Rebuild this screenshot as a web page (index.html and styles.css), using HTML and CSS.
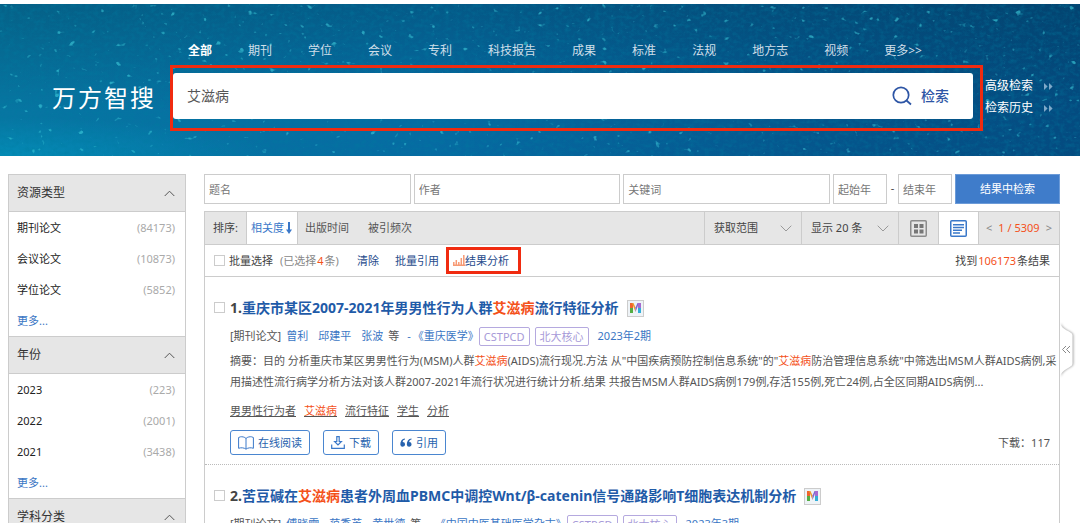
FILE: index.html
```html
<!DOCTYPE html>
<html lang="zh-CN">
<head>
<meta charset="utf-8">
<title>万方智搜</title>
<link rel="stylesheet" href="styles.css">
</head>
<body>
<header class="hero">
  <svg class="hero-texture" aria-hidden="true">
    <filter id="specks" x="0" y="0" width="100%" height="100%">
      <feTurbulence type="fractalNoise" baseFrequency="0.13 0.16" numOctaves="2" seed="8"/>
      <feColorMatrix values="0 0 0 0 0.05  0 0 0 0 0.62  0 0 0 0 0.72  8 0 0 0 -5.7"/>
    </filter>
    <filter id="grain" x="0" y="0" width="100%" height="100%">
      <feTurbulence type="fractalNoise" baseFrequency="0.2 0.25" numOctaves="3" seed="3"/>
      <feColorMatrix values="0 0 0 0 0  0 0 0 0 0.2  0 0 0 0 0.35  0 2 0 0 -0.8"/>
    </filter>
    <rect width="100%" height="100%" filter="url(#grain)" opacity="0.4"/>
    <rect width="100%" height="100%" filter="url(#specks)" opacity="0.6"/>
  </svg>
  <div class="brand"><span>万</span><span>方</span><span>智</span><span>搜</span></div>
  <div class="search">
    <nav class="tabs">
      <a class="on" href="#">全部</a><a href="#">期刊</a><a href="#">学位</a><a href="#">会议</a><a href="#">专利</a><a href="#">科技报告</a><a href="#">成果</a><a href="#">标准</a><a href="#">法规</a><a href="#">地方志</a><a href="#">视频</a><a href="#">更多&gt;&gt;</a>
    </nav>
    <div class="search-mark">
      <form class="search-box">
        <input type="text" value="艾滋病" aria-label="检索词">
        <button type="button">
          <svg width="20" height="20" viewBox="0 0 20 20" fill="none" stroke="#2d55a5" stroke-width="1.7"><circle cx="9" cy="9" r="7.7"/><path d="M14.5 14.5 19 18.5"/></svg>检索
        </button>
      </form>
    </div>
  </div>
  <nav class="side-links">
    <a href="#">高级检索<svg width="10" height="7" viewBox="0 0 10 7" fill="#7fa9c9"><path d="M1 0 4.600 3.500 1 7zM6 0 9.600 3.500 6 7z"/></svg></a>
    <a href="#">检索历史<svg width="10" height="7" viewBox="0 0 10 7" fill="#7fa9c9"><path d="M1 0 4.600 3.500 1 7zM6 0 9.600 3.500 6 7z"/></svg></a>
  </nav>
</header>

<div class="page">
  <aside class="facets">
    <section>
      <h2>资源类型<svg width="11" height="7" viewBox="0 0 11 7"><path d="M.7 6 5.500 1.200 10.300 6"/></svg></h2>
      <ul>
        <li><a href="#">期刊论文</a><span>(84173)</span></li>
        <li><a href="#">会议论文</a><span>(10873)</span></li>
        <li><a href="#">学位论文</a><span>(5852)</span></li>
        <li><a class="more" href="#">更多...</a></li>
      </ul>
    </section>
    <section>
      <h2>年份<svg width="11" height="7" viewBox="0 0 11 7"><path d="M.7 6 5.500 1.200 10.300 6"/></svg></h2>
      <ul>
        <li><a href="#">2023</a><span>(223)</span></li>
        <li><a href="#">2022</a><span>(2001)</span></li>
        <li><a href="#">2021</a><span>(3438)</span></li>
        <li><a class="more" href="#">更多...</a></li>
      </ul>
    </section>
    <section>
      <h2>学科分类<svg width="11" height="7" viewBox="0 0 11 7"><path d="M.7 6 5.500 1.200 10.300 6"/></svg></h2>
    </section>
  </aside>

  <main class="main">
    <form class="refine">
      <input type="text" placeholder="题名" aria-label="题名">
      <input type="text" placeholder="作者" aria-label="作者">
      <input type="text" placeholder="关键词" aria-label="关键词">
      <div class="years"><input type="text" placeholder="起始年" aria-label="起始年"><span>-</span><input type="text" placeholder="结束年" aria-label="结束年"></div>
      <button type="button">结果中检索</button>
    </form>

    <div class="panel">
      <div class="toolbar">
        <span class="sort-label">排序:</span>
        <button class="sort on" type="button">相关度<svg width="6" height="12" viewBox="0 0 6 12"><path d="M3 0v10" stroke="#3a78c9" stroke-width="2"/><path d="M0 7.500h6L3 12z" fill="#3a78c9"/></svg></button>
        <button class="sort" type="button">出版时间</button>
        <button class="sort late" type="button">被引频次</button>
        <div class="tools">
          <div class="drop"><select aria-label="获取范围"><option>获取范围</option></select><svg width="12" height="7" viewBox="0 0 12 7"><path d="M.7.7 6 6 11.300.7"/></svg></div>
          <div class="drop"><select aria-label="显示条数"><option>显示 20 条</option></select><svg width="12" height="7" viewBox="0 0 12 7"><path d="M.7.7 6 6 11.300.7"/></svg></div>
          <button class="view" type="button" aria-label="网格"><svg width="17" height="17" viewBox="0 0 17 17"><rect x=".75" y=".75" width="15.500" height="15.500" rx="1" fill="none" stroke="#8c8c8c" stroke-width="1.500"/><path fill="#777" d="M4 4h4v4H4zM9.500 4h4v4h-4zM4 9.500h4v4H4zM9.500 9.500h4v4h-4z"/></svg></button>
          <button class="view on" type="button" aria-label="列表"><svg width="17" height="17" viewBox="0 0 17 17" fill="none" stroke="#3a78c9" stroke-width="1.500"><rect x=".75" y=".75" width="15.500" height="15.500" rx="1"/><path d="M3 4.800h11M3 7.500h11M3 10.200h9M3 12.900h7"/></svg></button>
          <div class="pager"><button type="button">&lt;</button><b>1 / 5309</b><button type="button">&gt;</button></div>
        </div>
      </div>
      <div class="batch">
        <label class="pick"><input type="checkbox">批量选择</label>
        <span class="picked">(已选择<em>4</em>条)</span>
        <a href="#">清除</a>
        <a class="cite-all" href="#">批量引用</a>
        <a class="analyse" href="#"><svg width="12" height="11" viewBox="0 0 12 11" stroke="#f79a74" stroke-width="1.500"><path d="M.8 10V7M3.300 10V5M5.800 10V7M8.300 10V3M10.800 10V0M0 10.300h12"/></svg>结果分析</a>
        <span class="found">找到<em>106173</em>条结果</span>
      </div>

      <article class="item">
        <input type="checkbox" aria-label="选择第1条">
        <div class="body">
          <h3>1.<a href="#">重庆市某区2007-2021年男男性行为人群<em>艾滋病</em>流行特征分析</a><span class="m"><svg width="11" height="10" viewBox="0 0 11 10"><path d="M0 0h3v10H0z" fill="#f0642d"/><path d="M0 5h3v5H0z" fill="#54ae43"/><path d="M2 0h1.500L5.500 4.500V9z" fill="#ed9b2d"/><path d="M5.500 9V4.500L7.500 0H9z" fill="#7e69cf"/><path d="M8 0h3v10H8z" fill="#a66bd0"/><path d="M8 5h3v5H8z" fill="#32aed8"/></svg></span></h3>
          <div class="meta">
            <span class="kind">[期刊论文]</span><span class="authors"><a href="#">曾利</a><a href="#">邱建平</a><a href="#">张波</a></span><span class="etc">等</span><span class="dash">-</span><a class="journal" href="#">《重庆医学》</a><span class="tag">CSTPCD</span><span class="tag">北大核心</span><a class="issue" href="#">2023年2期</a>
          </div>
          <p class="abstract">摘要：目的 分析重庆市某区男男性行为(MSM)人群<em>艾滋病</em>(AIDS)流行现况.方法 从"中国疾病预防控制信息系统"的"<em>艾滋病</em>防治管理信息系统"中筛选出MSM人群AIDS病例,采用描述性流行病学分析方法对该人群2007-2021年流行状况进行统计分析.结果 共报告MSM人群AIDS病例179例,存活155例,死亡24例,占全区同期AIDS病例...</p>
          <div class="words"><a href="#">男男性行为者</a><a href="#"><em>艾滋病</em></a><a href="#">流行特征</a><a href="#">学生</a><a href="#">分析</a></div>
          <div class="actions">
            <button type="button"><svg width="16" height="14" viewBox="0 0 16 14" fill="none" stroke="#3a78c9"><path d="M8 2.500C6.500.800 4 .600 2.500.8L.6 1.500v10.800c2.500-.9 5.400-.7 7.400.9 2-1.600 4.900-1.800 7.400-.9V1.500L13.500.8C12 .6 9.500.8 8 2.500zM8 2.500V13"/></svg>在线阅读</button>
            <button type="button"><svg width="14" height="13" viewBox="0 0 14 13" fill="none" stroke="#3a78c9" stroke-width="1.200"><path d="M5.800.6h2.400v4.900h2.200L7 9 3.600 5.500h2.200zM.7 8.500v3.800h12.600V8.500"/></svg>下载</button>
            <button type="button"><svg width="12" height="10" viewBox="0 0 12 10" fill="#2763ae"><path d="M5 .5C2 .8.300 3 .300 6.500a2.400 2.400 0 1 0 2.400-2.600C2.700 2.500 3.800 1.500 5 1.400zM11.500.5C8.500.8 6.800 3 6.800 6.500a2.400 2.400 0 1 0 2.400-2.600c0-1.400 1.100-2.400 2.300-2.500z"/></svg>引用</button>
            <span class="count">下载：117</span>
          </div>
        </div>
      </article>

      <article class="item">
        <input type="checkbox" aria-label="选择第2条">
        <div class="body">
          <h3>2.<a href="#">苦豆碱在<em>艾滋病</em>患者外周血PBMC中调控Wnt/β-catenin信号通路影响T细胞表达机制分析</a><span class="m"><svg width="11" height="10" viewBox="0 0 11 10"><path d="M0 0h3v10H0z" fill="#f0642d"/><path d="M0 5h3v5H0z" fill="#54ae43"/><path d="M2 0h1.500L5.500 4.500V9z" fill="#ed9b2d"/><path d="M5.500 9V4.500L7.500 0H9z" fill="#7e69cf"/><path d="M8 0h3v10H8z" fill="#a66bd0"/><path d="M8 5h3v5H8z" fill="#32aed8"/></svg></span></h3>
          <div class="meta">
            <span class="kind">[期刊论文]</span><span class="authors"><a href="#">傅晓雯</a><a href="#">范秀英</a><a href="#">黄世德</a></span><span class="etc">等</span><span class="dash">-</span><a class="journal" href="#">《中国中医基础医学杂志》</a><span class="tag">CSTPCD</span><span class="tag">北大核心</span><a class="issue" href="#">2023年3期</a>
          </div>
        </div>
      </article>
    </div>
  </main>
</div>

<button class="drawer" type="button" aria-label="展开侧栏"><svg width="20" height="60" viewBox="0 0 20 60"><path class="tab" d="M0 3C1 10 12 11 12.500 15v29C12 48 1 49 0 57z"/><path class="arrows" d="M6 26 2.500 29.500 6 33M10 26 6.500 29.500 10 33"/></svg></button>
</body>
</html>
```
FILE: styles.css
```css
* { box-sizing: border-box; }

html, body { height: 100%; }

body {
  margin: 0;
  padding-top: 4px;
  overflow: hidden;
  position: relative;
  background: #fff;
  color: #444;
  font: 11px/20px "Noto Sans", "Noto Sans CJK SC", sans-serif;
}

input, button, select { font: inherit; color: inherit; }
button { border: 0; padding: 0; background: none; cursor: pointer; }
a { color: #3a76c4; text-decoration: none; }
em { color: #f4511a; font-style: normal; }
svg { flex: none; }

/* Banner */
.hero {
  position: relative;
  display: flex;
  height: 152px;
  background:
    radial-gradient(ellipse at 0 100%, rgba(0, 160, 200, .5), transparent 18%),
    linear-gradient(to bottom, rgba(0, 50, 75, .3), transparent 70%),
    linear-gradient(90deg, #0776a2, #066ba2 40%, #05568d 75%, #044b80);
  color: #fff;
}

.hero-texture { position: absolute; inset: 0; width: 100%; height: 100%; }
.hero > :not(.hero-texture) { position: relative; }

.brand {
  display: flex;
  gap: 2px;
  width: 170px;
  padding: 77px 0 0 52px;
  font-size: 24px;
  line-height: 34px;
}

.search { flex: 1; padding-top: 37px; }

.tabs {
  display: flex;
  gap: 36px;
  padding-left: 18px;
  font-size: 12px;
  line-height: 20px;
  white-space: nowrap;
}

.tabs a { color: #cfdfe9; }
.tabs .on { color: #fff; font-weight: 700; }

.search-mark {
  margin-top: 4px;
  padding: 5px 7px 9px 0;
  border: 3px solid #f02b10;
}

.search-box {
  display: flex;
  height: 46px;
  border-radius: 3px;
  background: #fff;
}

.search-box input {
  flex: 1;
  min-width: 0;
  padding: 0 14px;
  border: 0;
  outline: 0;
  background: none;
  color: #555;
  font-size: 14px;
}

.search-box button {
  display: flex;
  align-items: center;
  gap: 9px;
  padding-right: 24px;
  color: #2d55a5;
  font-size: 14px;
  font-weight: 500;
}

.side-links {
  display: flex;
  flex-direction: column;
  gap: 2px;
  width: 97px;
  padding: 72px 0 0 2px;
  font-size: 12px;
}

.side-links a { display: flex; align-items: center; gap: 10px; color: #fff; }

/* Page columns */
.page { display: flex; gap: 18px; padding: 18px 20px 0 8px; }

.facets {
  width: 178px;
  border: solid #ccc;
  border-width: 0 1px;
}

.facets h2 {
  display: flex;
  align-items: center;
  justify-content: space-between;
  height: 38px;
  margin: 0;
  padding: 0 10px 0 8px;
  border: solid #ccc;
  border-width: 1px 0;
  background: #e6e6e6;
  color: #333;
  font-size: 12px;
  font-weight: 400;
}

.facets svg { fill: none; stroke: #555; }
.facets ul { margin: 0; padding: 0 10px 0 8px; list-style: none; }
.facets li { display: flex; justify-content: space-between; line-height: 31px; }
.facets a { color: #222; }
.facets .more { color: #3a76c4; }
.facets span { color: #aaa; }

.main { flex: 1; min-width: 0; }

.refine { display: flex; gap: 3px; }

.refine input {
  flex: 1;
  min-width: 0;
  height: 30px;
  padding: 0 4px;
  border: 1px solid #ccc;
  background: #fff;
}

.refine input::placeholder { color: #777; opacity: 1; }
.years { display: flex; width: 119px; line-height: 28px; }
.years span { width: 11px; text-align: center; }

.refine button {
  width: 105px;
  border: 1px solid #6c9bd8;
  background: #3f7cca;
  color: #fff;
}

/* Results panel */
.panel { margin-top: 7px; border: 1px solid #ccc; }

.toolbar {
  display: flex;
  height: 33px;
  border-bottom: 1px solid #ccc;
  background: #e6e6e6;
  line-height: 32px;
}

.sort-label { width: 41px; padding-left: 8px; }
.sort { padding: 0 7px; color: #555; }
.sort.late { margin-left: 5px; }

.sort.on {
  display: flex;
  align-items: center;
  gap: 2px;
  padding: 0 5px 0 4px;
  border: solid #ccc;
  border-width: 0 1px;
  background: #fff;
  color: #3a78c9;
}

.tools { display: flex; margin-left: auto; }
.drop { display: grid; align-items: center; width: 97px; border-left: 1px solid #ccc; }
.drop > * { grid-area: 1 / 1; }
.drop svg { justify-self: end; margin-right: 9px; fill: none; stroke: #999; pointer-events: none; }

.drop select {
  width: 100%;
  height: 32px;
  padding: 0 9px;
  border: 0;
  appearance: none;
  background: none;
}

.view {
  display: grid;
  place-items: center;
  width: 40px;
  border-left: 1px solid #ccc;
}

.view.on { background: #fff; }

.pager {
  display: flex;
  justify-content: space-between;
  width: 81px;
  padding: 0 7px;
  border-left: 1px solid #ccc;
  color: #888;
}

.pager b { color: #f4511a; font-size: 11px; font-weight: 400; }

.batch {
  display: flex;
  align-items: center;
  height: 32px;
  padding: 0 9px;
  border-bottom: 1px solid #ccc;
}

.batch a { color: #1f4b8c; }
.pick { display: flex; align-items: center; gap: 4px; }

input[type="checkbox"] {
  flex: none;
  width: 11px;
  height: 11px;
  margin: 0;
  border: 1px solid #ccc;
  appearance: none;
  background: #fff;
}

.picked { margin: 0 18px 0 7px; color: #888; }
.picked em { margin: 0 1px; }
.batch .cite-all { margin: 0 7px 0 16px; }

.analyse {
  display: flex;
  align-items: center;
  height: 27px;
  padding: 0 9px 0 4px;
  border: 3px solid #f02b10;
}

.found { margin-left: auto; }
.found em { margin: 0 1px; }

.item {
  display: flex;
  gap: 5px;
  padding: 19px 9px 9px;
  border-bottom: 1px dotted #bbb;
}

.item > input { margin-top: 6px; }
.body { flex: 1; min-width: 0; }

.item h3 {
  display: flex;
  align-items: center;
  margin: 0 0 4px;
  font-size: 14px;
  line-height: 24px;
  white-space: nowrap;
}

.item h3 a { color: #1f5ba8; }

.m {
  display: grid;
  place-items: center;
  width: 17px;
  height: 17px;
  margin-left: 8px;
  border: 1px solid #ccc;
  background: #eef3f7;
}

.meta { display: flex; align-items: center; height: 24px; color: #555; white-space: nowrap; }
.kind { margin-right: 5px; }
.authors { display: flex; gap: 10px; }
.etc { margin-left: 5px; }
.dash { margin: 0 2px 0 8px; color: #3a76c4; }
.journal { margin-right: -5px; }

.tag {
  margin-left: 5px;
  padding: 0 4px;
  border: 1px solid #b5a9df;
  border-radius: 2px;
  color: #a79ad8;
  line-height: 17px;
}

.issue { margin-left: 9px; }

.abstract { margin: 2px -9px 9px 0; color: #555; line-height: 21px; }

.words { display: flex; gap: 8px; }
.words a { color: #555; text-decoration: underline; }

.actions { display: flex; align-items: center; gap: 13px; margin-top: 9px; }

.actions button {
  display: flex;
  align-items: center;
  gap: 4px;
  height: 25px;
  padding: 0 7px;
  border: 1px solid #4a86d0;
  border-radius: 3px;
  color: #2763ae;
}

.count { margin-left: auto; color: #555; }

/* Drawer handle at the window edge */
.drawer { position: absolute; top: 320px; right: 0; height: 60px; }
.drawer svg { display: block; }
.drawer .tab { fill: #fff; filter: drop-shadow(1px 0 1px #aaa); }
.drawer .arrows { fill: none; stroke: #888; }
```
